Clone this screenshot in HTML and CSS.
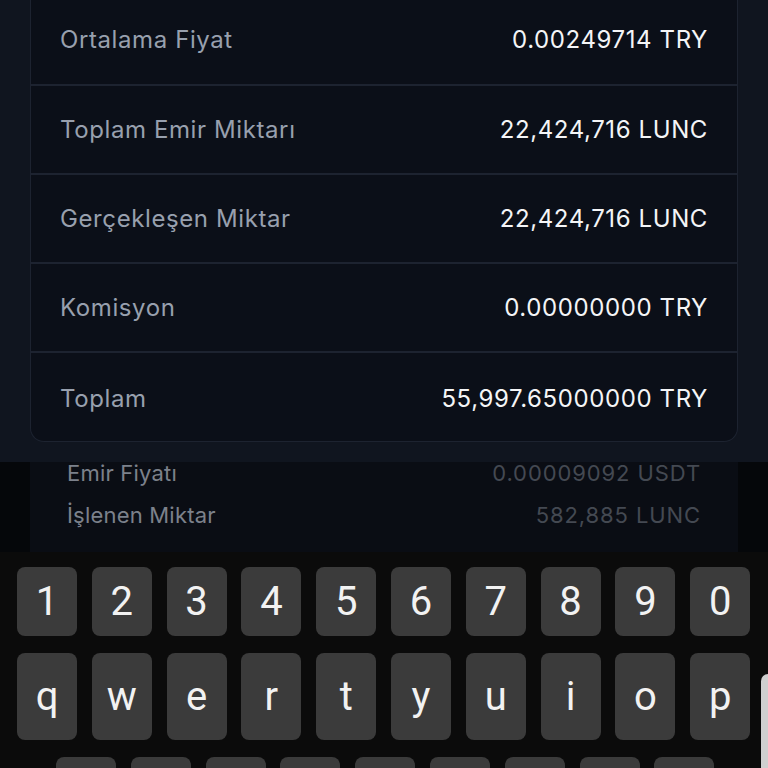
FILE: index.html
```html
<!DOCTYPE html>
<html>
<head>
    <title>Emir Detayı</title>
    <link rel="stylesheet" href="styles.css">
</head>
<body>
    <div class="screen">
        <div class="details">
            <div class="card">
                <div class="row first">
                    <span class="label">Ortalama Fiyat</span>
                    <span class="value">0.00249714 TRY</span>
                </div>
                <div class="row">
                    <span class="label">Toplam Emir Miktarı</span>
                    <span class="value">22,424,716 LUNC</span>
                </div>
                <div class="row">
                    <span class="label">Gerçekleşen Miktar</span>
                    <span class="value">22,424,716 LUNC</span>
                </div>
                <div class="row">
                    <span class="label">Komisyon</span>
                    <span class="value">0.00000000 TRY</span>
                </div>
                <div class="row last">
                    <span class="label">Toplam</span>
                    <span class="value">55,997.65000000 TRY</span>
                </div>
            </div>
        </div>

        <div class="behind">
            <div class="behind-inner">
                <div class="dim-row">
                    <span>Emir Fiyatı</span>
                    <span class="dim-value">0.00009092 USDT</span>
                </div>
                <div class="dim-row">
                    <span>İşlenen Miktar</span>
                    <span class="dim-value">582,885 LUNC</span>
                </div>
            </div>
        </div>

        <div class="keyboard">
            <div class="keys digits">
                <div class="key">1</div>
                <div class="key">2</div>
                <div class="key">3</div>
                <div class="key">4</div>
                <div class="key">5</div>
                <div class="key">6</div>
                <div class="key">7</div>
                <div class="key">8</div>
                <div class="key">9</div>
                <div class="key">0</div>
            </div>
            <div class="keys letters">
                <div class="key">q</div>
                <div class="key">w</div>
                <div class="key">e</div>
                <div class="key">r</div>
                <div class="key">t</div>
                <div class="key">y</div>
                <div class="key">u</div>
                <div class="key">i</div>
                <div class="key">o</div>
                <div class="key">p</div>
            </div>
            <!-- only the top edge of the home row is on screen -->
            <div class="keys home">
                <div class="key"></div>
                <div class="key"></div>
                <div class="key"></div>
                <div class="key"></div>
                <div class="key"></div>
                <div class="key"></div>
                <div class="key"></div>
                <div class="key"></div>
                <div class="key"></div>
            </div>
            <div class="edge-handle"></div>
        </div>
    </div>
</body>
</html>
```

FILE: styles.css
```css
body {
    margin: 0;
    font-family: Inter, "Noto Sans", sans-serif;
}

.screen {
    position: relative;
    width: 768px;
    height: 768px;
    overflow: hidden;
    background-color: #000;
}

.details {
    background-color: #10151f;
    padding: 1px 30px 20px;
}

.card {
    margin-top: -6px;
    background-color: #0b0f18;
    border: 1px solid #1d2330;
    border-top: none;
    border-radius: 0 0 14px 14px;
}

.row {
    display: flex;
    justify-content: space-between;
    align-items: center;
    height: 87px;
    padding: 0 29px;
    border-top: 2px solid #1d2330;
}

.row.first {
    height: 89px;
    border-top: none;
}

.row.last {
    height: 86px;
    padding-top: 2px;
}

.label {
    font-size: 24px;
    letter-spacing: 0.6px;
    color: #98a0ae;
}

.value {
    font-size: 24px;
    letter-spacing: 0.6px;
    color: #f4f5f7;
}

.behind {
    background-color: #05070a;
    height: 90px;
    padding: 0 30px;
}

.behind-inner {
    display: flex;
    flex-direction: column;
    gap: 20px;
    background-color: #0a0d14;
    height: 100%;
    box-sizing: border-box;
    padding: 0 37px;
}

.dim-row {
    display: flex;
    justify-content: space-between;
    align-items: center;
    height: 22px;
    font-size: 22px;
    letter-spacing: 0.2px;
    color: #7c818b;
}

.dim-value {
    letter-spacing: 0.9px;
    color: #444952;
}

.keyboard {
    background-color: #0b0b0b;
    height: 216px;
    padding: 15px 18px 0 17px;
    font-family: Roboto, sans-serif;
}

.keys {
    display: grid;
    grid-template-columns: repeat(10, 60px);
    column-gap: 14.8px;
    margin-bottom: 17px;
}

.keys.digits .key {
    height: 69px;
}

.keys.letters .key {
    height: 87px;
}

.keys.home {
    grid-template-columns: repeat(9, 60px);
    padding-left: 39px;
}

.keys.home .key {
    height: 87px;
}

.key {
    display: flex;
    align-items: center;
    justify-content: center;
    background-color: #3b3b3b;
    border-radius: 8px;
    color: #f2f2f2;
    font-size: 40px;
}

.edge-handle {
    position: absolute;
    right: 0;
    top: 674px;
    width: 7px;
    height: 94px;
    background-color: #cfcfcf;
    border-radius: 8px 0 0 0;
}
```
